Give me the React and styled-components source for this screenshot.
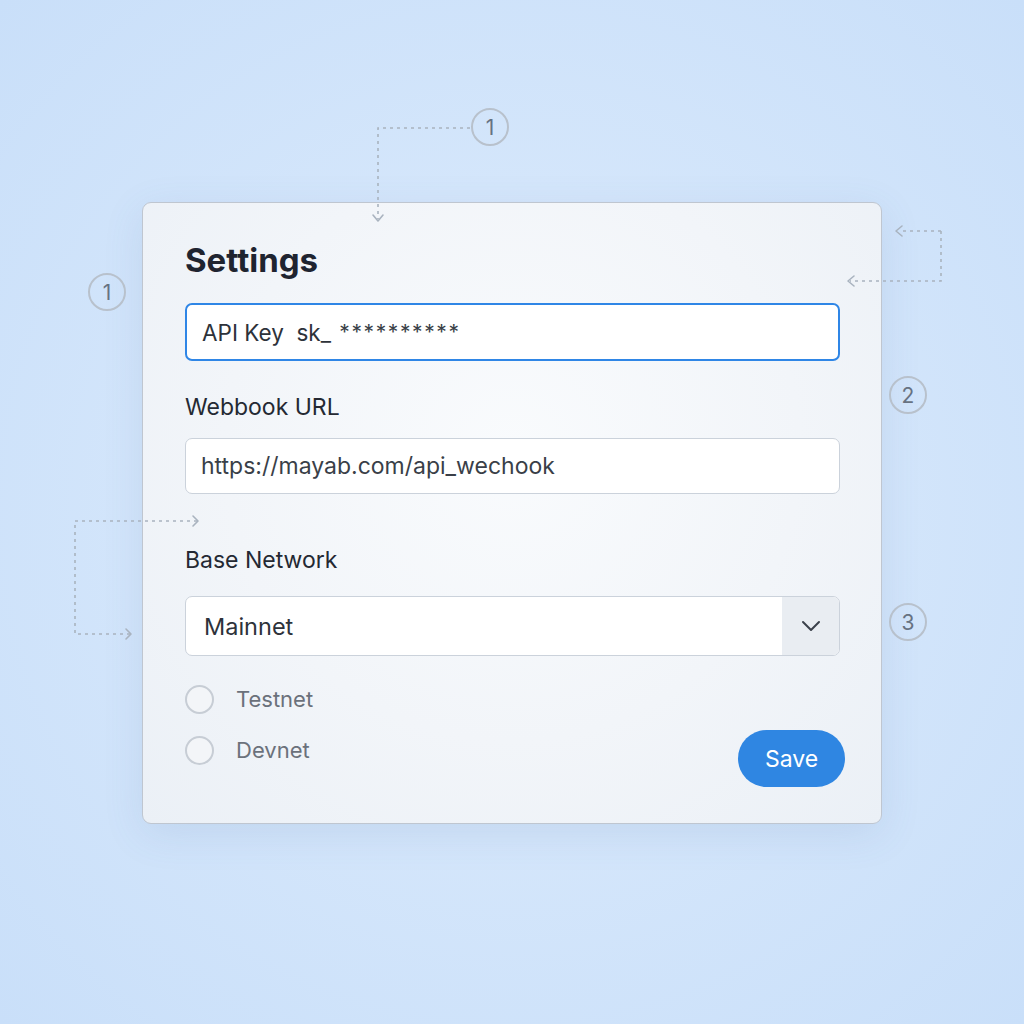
import React from "react";
import styled, { createGlobalStyle } from "styled-components";

const GlobalStyle = createGlobalStyle`
    html, body {
        margin: 0;
        padding: 0;
    }
    body {
        font-family: Inter, "Noto Sans", "Liberation Sans", sans-serif;
        background: #cfe3fb;
    }
`;

const badges = [
    { n: 1, x: 490, y: 127 },
    { n: 1, x: 107, y: 292 },
    { n: 2, x: 908, y: 395 },
    { n: 3, x: 908, y: 622 },
];

const App = () => {
    return (
        <>
            <GlobalStyle />
            <Page>
                <Card>
                    <Title>Settings</Title>
                    <TextInput $active>
                        API Key&nbsp;&nbsp;sk_&nbsp;<Masked>**********</Masked>
                    </TextInput>
                    <Label $top={31}>Webbook URL</Label>
                    <TextInput>https://mayab.com/api_wechook</TextInput>
                    <Label $top={51}>Base Network</Label>
                    <Select>
                        <SelectValue>Mainnet</SelectValue>
                        <SelectToggle>
                            <svg width="20" height="12" viewBox="0 0 20 12" fill="none">
                                <path d="M2 2 L10 10 L18 2" stroke="#3b414b" strokeWidth="2" strokeLinecap="round" strokeLinejoin="round" />
                            </svg>
                        </SelectToggle>
                    </Select>
                    <Bottom>
                        <Radios>
                            <RadioRow>
                                <Radio />
                                <RadioLabel>Testnet</RadioLabel>
                            </RadioRow>
                            <RadioRow>
                                <Radio />
                                <RadioLabel>Devnet</RadioLabel>
                            </RadioRow>
                        </Radios>
                        <SaveButton>Save</SaveButton>
                    </Bottom>
                </Card>

                <Annotations width="1024" height="1024" viewBox="0 0 1024 1024" fill="none">
                    <g stroke="#a9b3bf" strokeWidth="1.6" strokeDasharray="3 4">
                        <path d="M470 128 H378 V219" />
                        <path d="M941 231 H899" />
                        <path d="M941 231 V281 H850" />
                        <path d="M197 521 H75 V634 H130" />
                    </g>
                    <g stroke="#a9b3bf" strokeWidth="1.6" strokeLinecap="round" strokeLinejoin="round">
                        <path d="M373 215 L378 221 L383 215" />
                        <path d="M902 226 L896 231 L902 236" />
                        <path d="M854 276 L848 281 L854 286" />
                        <path d="M193 516 L198 521 L193 526" />
                        <path d="M126 629 L131 634 L126 639" />
                    </g>
                </Annotations>

                {badges.map((b, i) => (
                    <Badge key={i} style={{ left: b.x - 19, top: b.y - 19 }}>
                        {b.n}
                    </Badge>
                ))}
            </Page>
        </>
    );
};

const Page = styled.div`
    position: relative;
    width: 1024px;
    height: 1024px;
    overflow: hidden;
    box-sizing: border-box;
    padding: 202px 0 0 142px;
    background: radial-gradient(ellipse at 50% 50%, #e1edfc 0%, #d4e6fb 45%, #c9dff9 100%);
`;

const Card = styled.div`
    width: 740px;
    height: 622px;
    box-sizing: border-box;
    padding: 37px 41px 0 42px;
    border: 1.5px solid #bfc6d0;
    border-radius: 9px;
    background: radial-gradient(ellipse at 50% 40%, #f9fbfd 0%, #f2f5f9 55%, #ebf0f6 100%);
    box-shadow: 0 10px 40px rgba(70, 110, 160, 0.12);
    display: flex;
    flex-direction: column;
`;

const Title = styled.div`
    font-size: 33px;
    line-height: 40px;
    font-weight: 700;
    color: #1f2430;
    margin-bottom: 23px;
`;

const TextInput = styled.div`
    height: ${(p) => (p.$active ? "58px" : "56px")};
    box-sizing: border-box;
    display: flex;
    align-items: center;
    padding: 0 15px;
    background: #ffffff;
    border: ${(p) => (p.$active ? "2px solid #2f86e6" : "1.5px solid #cbd2db")};
    border-radius: 7px;
    font-size: ${(p) => (p.$active ? "22.5px" : "23px")};
    color: ${(p) => (p.$active ? "#2d323a" : "#3a3f48")};
    white-space: nowrap;
`;

const Masked = styled.span`
    font-size: 21px;
    letter-spacing: 1.6px;
    color: #3a3f48;
    margin-left: 2px;
`;

const Label = styled.div`
    margin-top: ${(p) => p.$top}px;
    margin-bottom: ${(p) => (p.$top > 40 ? 21 : 16)}px;
    font-size: 23px;
    line-height: 30px;
    color: #242933;
`;

const Select = styled.div`
    height: 60px;
    box-sizing: border-box;
    display: flex;
    border: 1.5px solid #cbd2db;
    border-radius: 7px;
    background: #ffffff;
    overflow: hidden;
`;

const SelectValue = styled.div`
    flex: 1;
    display: flex;
    align-items: center;
    padding-left: 18px;
    font-size: 23.5px;
    color: #2d323a;
`;

const SelectToggle = styled.div`
    width: 57px;
    display: flex;
    align-items: center;
    justify-content: center;
    background: #e9edf2;
`;

const Bottom = styled.div`
    margin-top: 28px;
    margin-right: -5px;
    display: flex;
    justify-content: space-between;
    align-items: flex-end;
`;

const Radios = styled.div`
    display: flex;
    flex-direction: column;
    gap: 21px;
    padding-bottom: 22px;
`;

const RadioRow = styled.div`
    display: flex;
    align-items: center;
    height: 30px;
`;

const Radio = styled.div`
    width: 29px;
    height: 29px;
    box-sizing: border-box;
    border: 2px solid #c7cdd5;
    border-radius: 50%;
    background: #f3f5f8;
`;

const RadioLabel = styled.div`
    margin-left: 22px;
    font-size: 22px;
    color: #6b717b;
`;

const SaveButton = styled.button`
    width: 107px;
    height: 57px;
    border: 0;
    border-radius: 29px;
    background: #2f86e2;
    color: #ffffff;
    font-family: inherit;
    font-size: 23px;
    cursor: pointer;
`;

const Annotations = styled.svg`
    position: absolute;
    left: 0;
    top: 0;
    pointer-events: none;
`;

const Badge = styled.div`
    position: absolute;
    width: 38px;
    height: 38px;
    box-sizing: border-box;
    border: 2px solid #b8c1cc;
    border-radius: 50%;
    display: flex;
    align-items: center;
    justify-content: center;
    font-size: 21px;
    color: #677282;
`;

export default App;
